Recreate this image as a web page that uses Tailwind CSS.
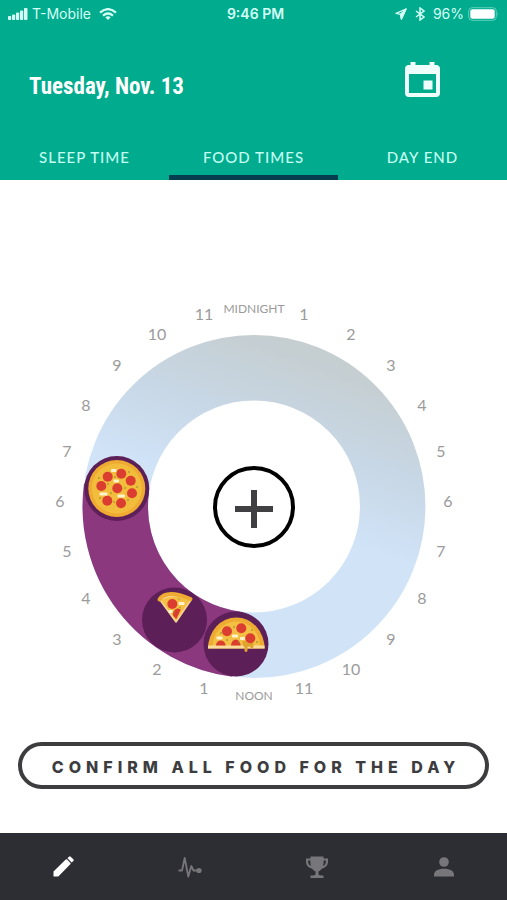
<!DOCTYPE html>
<html lang="en">
<head>
<meta charset="utf-8">
<meta name="viewport" content="width=device-width, initial-scale=1">
<title>Food Times</title>
<script src="https://cdn.jsdelivr.net/npm/@tailwindcss/browser@4"></script>
</head>
<body class="flex min-h-screen flex-col bg-white font-['Lato','Open_Sans',sans-serif]">

<header class="bg-[#00ab8e] text-white">
  <!-- Status bar -->
  <div class="grid h-7 grid-cols-3 items-center px-2 font-['Inter','Roboto',sans-serif] text-sm text-[#d5fff6]">
    <div class="flex items-center gap-1">
      <svg class="h-3 w-5" viewBox="0 0 20 12" fill="currentColor" aria-hidden="true"><rect x="0" y="8" width="3.200" height="4" rx="1"/><rect x="4" y="6.500" width="3.200" height="5.500" rx="1"/><rect x="8" y="4.500" width="3.200" height="7.500" rx="1"/><rect x="12" y="2.500" width="3.200" height="9.500" rx="1"/><rect x="16" y="0" width="3.500" height="12" rx="1"/></svg>
      <span>T-Mobile</span>
      <svg class="ml-1 h-3 w-[18px]" viewBox="0 0 18 12" fill="none" stroke="currentColor" stroke-width="2.200" aria-hidden="true"><path d="M1 4.600Q9-2.400 17 4.600M4 7.600q5-4.200 10 0"/><path d="M6.300 9.300q2.700-2.200 5.400 0L9 12z" fill="currentColor" stroke="none"/></svg>
    </div>
    <div class="pl-1 text-center font-semibold">9:46 PM</div>
    <div class="flex items-center justify-end gap-1">
      <svg class="h-3 w-3" viewBox="0 0 12 12" fill="none" stroke="currentColor" stroke-width="1.300" stroke-linejoin="round" aria-hidden="true"><path d="M11 1 1 5.300l4.600 1L6.400 11z"/><path d="M11 1 5.600 6.300 6.400 11z" fill="currentColor"/></svg>
      <svg class="mx-1 h-[14px] w-[10px]" viewBox="0 0 10 14" fill="none" stroke="currentColor" stroke-width="1.500" aria-hidden="true"><path d="M1 4l8 6-4 3V1l4 3-8 6"/></svg>
      <span>96%</span>
      <svg class="h-[14px] w-[31px] shrink-0" viewBox="0 0 31 14" aria-hidden="true"><rect x=".7" y=".7" width="27.600" height="12.600" rx="3.500" fill="none" stroke="currentColor" stroke-opacity=".45"/><rect x="2.300" y="2.300" width="24.400" height="9.400" rx="2" fill="#fff"/><path d="M29.500 5q1.500 2 0 4z" fill="currentColor" fill-opacity=".5"/></svg>
    </div>
  </div>

  <div class="flex h-[106px] items-center justify-between pr-[67px] pb-1 pl-[29px]">
    <h1 class="pt-4 font-['Roboto_Condensed','Open_Sans_Condensed','Roboto',sans-serif] text-[23px] leading-7 font-bold">Tuesday, Nov. 13</h1>
    <button type="button" aria-label="Open calendar">
      <svg class="block h-[35px] w-[35px] text-[#effffc]" viewBox="0 0 35 35" fill="currentColor" aria-hidden="true"><path fill-rule="evenodd" d="M5.500 0h5v3h14V0h5v3h1.500a4 4 0 0 1 4 4v24a4 4 0 0 1-4 4H4a4 4 0 0 1-4-4V7a4 4 0 0 1 4-4h1.500zM4 12v19h27V12z"/><path d="M18.500 18.500h9v9h-9z"/></svg>
    </button>
  </div>

  <nav class="grid h-[46px] grid-cols-3 text-center text-[15px] font-medium tracking-[1px] text-[#c4fff2]" aria-label="Sections">
    <a href="#sleep" class="pt-[11px] leading-6">SLEEP TIME</a>
    <a href="#food" aria-current="page" class="border-b-[5px] border-[#073d50] pt-[11px] leading-6">FOOD TIMES</a>
    <a href="#end" class="pt-[11px] leading-6">DAY END</a>
  </nav>
</header>

<main class="flex-1 pt-[116px]">
  <div class="grid">
    <svg class="col-start-1 row-start-1 w-full" viewBox="0 296 507 421" role="img" aria-label="24 hour dial of food times">
      <defs>
        <linearGradient id="sky" gradientUnits="userSpaceOnUse" x1="310" y1="356" x2="254" y2="506">
          <stop offset="0" stop-color="#c5ced1"/><stop offset=".55" stop-color="#c8d8e7"/><stop offset="1" stop-color="#d0e3f7"/>
        </linearGradient>
      </defs>
      <circle cx="254" cy="506.500" r="138.700" fill="none" stroke="url(#sky)" stroke-width="65.500"/>
      <path d="M116.500 488A138.700 138.700 0 0 0 236.500 644.200" fill="none" stroke="#8b387f" stroke-width="65.500"/>

      <!-- Whole pizza -->
      <g>
        <circle cx="116.800" cy="488.500" r="32.500" fill="#5d1f58"/>
        <circle cx="116.800" cy="488.500" r="28.500" fill="#efaa32"/>
        <circle cx="116.800" cy="488.500" r="25" fill="#f2bd3d"/>
        <g fill="#dc3d31"><circle cx="107.700" cy="476.700" r="5"/><circle cx="121.300" cy="473.700" r="5"/><circle cx="130.700" cy="480.700" r="5"/><circle cx="101.300" cy="486" r="5"/><circle cx="117.300" cy="488.300" r="5"/><circle cx="132" cy="493.300" r="5"/><circle cx="107.300" cy="500.700" r="5"/><circle cx="121" cy="503.300" r="5"/></g>
        <g fill="#fff3d0"><rect x="111" y="469" width="5.500" height="3" rx="1"/><rect x="113.500" y="479.500" width="5.500" height="3" rx="1"/><rect x="99.500" y="492.500" width="8" height="3" rx="1"/><rect x="117.500" y="494.500" width="7.500" height="3" rx="1"/></g>
        <g fill="#a99a2c"><circle cx="99" cy="478" r=".9"/><circle cx="115" cy="477" r=".9"/><circle cx="125" cy="488" r=".9"/><circle cx="111" cy="493" r=".9"/><circle cx="128" cy="500" r=".9"/><circle cx="114" cy="502" r=".9"/><circle cx="100" cy="498" r=".9"/><circle cx="137" cy="487" r=".9"/><circle cx="108" cy="484" r=".9"/><circle cx="129" cy="472" r=".9"/></g>
      </g>

      <!-- Pizza slice -->
      <g>
        <circle cx="174.500" cy="620" r="32.500" fill="#5d1f58"/>
        <path d="M160 600Q173 592 191 600L176 622z" fill="#f3c044" stroke="#f9d596" stroke-width="1.500" stroke-linejoin="round"/>
        <path d="M159.500 599.500Q163 594 171 594T190.500 599" fill="none" stroke="#f0ab32" stroke-width="4" stroke-linecap="round"/>
        <circle cx="172.300" cy="604" r="5" fill="#dc3d31"/><path d="M174.300 617a5 5 0 0 1 6.500-7.500l-4.500 9.500z" fill="#dc3d31"/>
        <g fill="#fff3d0"><rect x="178.500" y="602" width="6" height="3" rx="1"/><rect x="168.500" y="610" width="4" height="3" rx="1"/></g>
        <g fill="#a99a2c"><circle cx="179" cy="599" r=".8"/><circle cx="180" cy="607.500" r=".8"/><circle cx="174" cy="612" r=".8"/></g>
      </g>

      <!-- Half pizza -->
      <g>
        <circle cx="236" cy="644" r="32.500" fill="#5d1f58"/>
        <path d="M208 648.500a28.300 31 0 0 1 56.600 0z" fill="#efaa32"/>
        <path d="M212.500 647a23.800 25.500 0 0 1 47.600 0z" fill="#f3c044"/>
        <rect x="208" y="645.500" width="56.600" height="3" fill="#fadd9d"/>
        <g fill="#dc3d31"><circle cx="227" cy="631.300" r="5"/><circle cx="241.300" cy="628.300" r="5"/><path d="M216 645.500a4.800 5 0 0 1 9.600 0zM231 645.500a4.800 6 0 0 1 9.600 0z"/></g>
        <path d="M242.500 641h11v6q-1 2.500-3 .5l-1-1-2 .5v4q-1.500 2-3 0v-4q-2-1-2-3z" fill="#dfa32f"/>
        <circle cx="250.300" cy="638.300" r="5" fill="#dc3d31"/>
        <g fill="#fff3d0"><rect x="216.500" y="636.500" width="6" height="3" rx="1"/><rect x="232" y="634.500" width="6" height="3" rx="1"/><rect x="240" y="637" width="5" height="3" rx="1"/></g>
        <g fill="#a99a2c"><circle cx="221" cy="633" r=".9"/><circle cx="234" cy="627" r=".9"/><circle cx="227" cy="640" r=".9"/><circle cx="239" cy="642" r=".9"/><circle cx="252" cy="630" r=".9"/><circle cx="257" cy="642" r=".9"/></g>
      </g>

      <!-- Hour labels -->
      <g class="font-['Lato','Open_Sans',sans-serif]" fill="#9b9b9b" font-size="16" text-anchor="middle">
        <text x="254" y="313" font-size="12">MIDNIGHT</text>
        <text x="304" y="320">1</text><text x="351" y="340">2</text><text x="391" y="371">3</text><text x="422" y="411">4</text><text x="441" y="457">5</text><text x="448" y="507">6</text><text x="441" y="557">7</text><text x="422" y="604">8</text><text x="391" y="645">9</text><text x="351" y="675">10</text><text x="304" y="694">11</text>
        <text x="254" y="700" font-size="12">NOON</text>
        <text x="204" y="694">1</text><text x="157" y="675">2</text><text x="117" y="645">3</text><text x="86" y="604">4</text><text x="67" y="557">5</text><text x="60" y="507">6</text><text x="67" y="457">7</text><text x="86" y="411">8</text><text x="117" y="371">9</text><text x="157" y="340">10</text><text x="204" y="320">11</text>
      </g>
    </svg>
    <button type="button" aria-label="Add food time" class="col-start-1 row-start-1 flex h-[82px] w-[82px] items-center justify-center place-self-center rounded-full border-4 border-black bg-white">
      <svg class="mt-1 h-[38px] w-[38px]" viewBox="0 0 38 38" fill="#404042" aria-hidden="true"><path d="M16 0h6v16h16v6H22v16h-6V22H0v-6h16z"/></svg>
    </button>
  </div>

  <div class="px-[18px] pt-[25px] pb-11">
    <button type="button" class="h-[47px] w-full rounded-full border-4 border-[#3d3d3f] bg-white pt-[2px] pl-[5px] font-['Inter','Open_Sans',sans-serif] text-base font-extrabold tracking-[5px] whitespace-nowrap text-[#3d3d3f]">CONFIRM ALL FOOD FOR THE DAY</button>
  </div>
</main>

<nav class="grid h-[67px] grid-cols-4 bg-[#2d2d34] text-[#77777b]" aria-label="Main">
  <a href="#edit" aria-label="Edit" class="flex items-center justify-center text-white"><svg class="h-[21px] w-[21px]" viewBox="0 0 21 21" fill="currentColor"><path d="M.5 20.500v-5L12.700 3.600a1 1 0 0 1 1.400 0l3.200 3.200a1 1 0 0 1 0 1.400L5.300 20.500zM14.400 2.300 16 .7a1.200 1.200 0 0 1 1.700 0l2.600 2.600a1.200 1.200 0 0 1 0 1.700l-1.600 1.600z"/></svg></a>
  <a href="#activity" aria-label="Activity" class="flex items-center justify-center"><svg class="h-6 w-6" viewBox="0 0 24 24" fill="none" stroke="currentColor" stroke-width="1.800" stroke-linejoin="round"><path d="M.5 15.500H4L6.700 3l3.600 18.500 3-10.500 2.200 4.500H20"/><circle cx="21" cy="15.500" r="2.600" fill="currentColor" stroke="none"/></svg></a>
  <a href="#awards" aria-label="Awards" class="flex items-center justify-center"><svg class="h-6 w-6" viewBox="0 0 24 24" fill="currentColor"><path d="M5.500 1.500h13v2H23v3c0 4-2.500 6.500-6 7-1 1.600-2.200 2.400-3.500 2.800V19c0 1 1 1.500 5 1.500V23h-13v-2.500c4 0 5-.5 5-1.500v-2.700C9.200 15.900 8 15.100 7 13.500c-3.500-.5-6-3-6-7v-3h4.500zm-2.500 4c0 3 1 4.700 3 5.500C5.500 9.500 5.300 7.500 5.400 5.500zm15.600 0c.1 2-.1 4-.6 5.500 2-.8 3-2.500 3-5.500z" fill-rule="evenodd"/></svg></a>
  <a href="#profile" aria-label="Profile" class="flex items-center justify-center"><svg class="h-6 w-6" viewBox="0 0 24 24" fill="currentColor"><circle cx="12" cy="7" r="4.800"/><path d="M2 21.500v-1.500c0-4 4-6.200 10-6.200s10 2.200 10 6.200v1.500z"/></svg></a>
</nav>

</body>
</html>
